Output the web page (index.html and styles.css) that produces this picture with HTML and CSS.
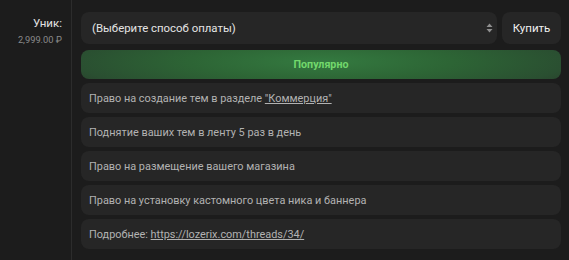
FILE: index.html
```html
<!DOCTYPE html>
<html lang="ru">
<head>
<meta charset="utf-8">
<link rel="stylesheet" href="styles.css">
</head>
<body>
<div class="page">
  <div class="side">
    <div class="title">Уник:</div>
    <div class="price">2,999.00 ₽</div>
  </div>
  <div class="main">
    <div class="buy-row">
      <div class="select">
        <span>(Выберите способ оплаты)</span>
        <svg class="arrows" width="7" height="10" viewBox="0 0 7 10"><path d="M3.5 0.5 L6.5 4 L0.5 4 Z M0.5 6 L6.5 6 L3.5 9.5 Z" fill="#8f8f8f"/></svg>
      </div>
      <div class="buy">Купить</div>
    </div>
    <div class="popular">Популярно</div>
    <div class="items">
      <div class="item">Право на создание тем в разделе <a href="#">"Коммерция"</a></div>
      <div class="item">Поднятие ваших тем в ленту 5 раз в день</div>
      <div class="item">Право на размещение вашего магазина</div>
      <div class="item">Право на установку кастомного цвета ника и баннера</div>
      <div class="item">Подробнее: <a href="#">https://lozerix.com/threads/34/</a></div>
    </div>
  </div>
</div>
</body>
</html>
```
FILE: styles.css
```css
html, body {
  margin: 0;
  padding: 0;
  background: #1c1c1c;
  height: 100%;
}
body {
  font-family: Roboto, "Noto Sans", sans-serif;
  color: #b4b4b4;
}
.page {
  display: flex;
  height: 260px;
}
.side {
  width: 62px;
  padding-right: 9px;
  border-right: 1px solid #2c2c2c;
  text-align: right;
  padding-top: 15px;
}
.title {
  font-size: 11.5px;
  color: #e2e2e2;
  line-height: 16px;
}
.price {
  font-size: 9.3px;
  color: #8a8a8a;
  line-height: 13px;
  margin-top: 2px;
}
.main {
  flex: 1;
  padding: 12px 8px 0 9px;
  display: flex;
  flex-direction: column;
}
.buy-row {
  display: flex;
  gap: 5px;
  height: 32px;
}
.select {
  flex: 1;
  background: #262626;
  border-radius: 8px;
  display: flex;
  align-items: center;
  justify-content: space-between;
  padding: 0 4px 0 11px;
  font-size: 11.4px;
  color: #e4e4e4;
}
.buy {
  width: 59px;
  background: #262626;
  border-radius: 8px;
  display: flex;
  align-items: center;
  justify-content: center;
  font-size: 11.5px;
  color: #f0f0f0;
}
.popular {
  margin-top: 6px;
  height: 29px;
  border-radius: 8px;
  background: radial-gradient(ellipse 60% 140% at 50% 40%, #347a40 0%, #2d6535 45%, #2a4f31 85%, #293f2c 100%);
  display: flex;
  align-items: center;
  justify-content: center;
  font-size: 10.7px;
  font-weight: 700;
  color: #72d86c;
}
.items {
  margin-top: 4px;
  display: flex;
  flex-direction: column;
  gap: 4px;
}
.item {
  height: 30px;
  background: #262626;
  border-radius: 8px;
  display: flex;
  align-items: center;
  padding: 0 8px;
  font-size: 10.9px;
  color: #b2b2b2;
  white-space: pre;
}
.item a {
  color: #b2b2b2;
  text-decoration: underline;
}
```
